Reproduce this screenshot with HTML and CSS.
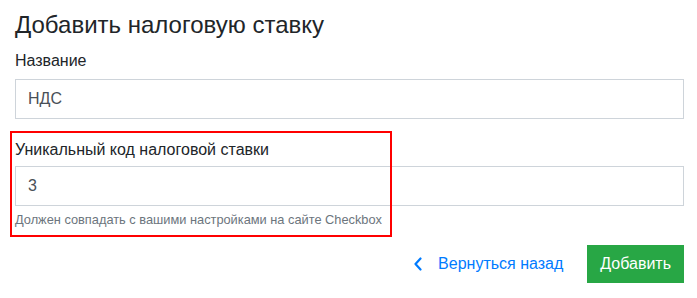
FILE: index.html
```html
<!DOCTYPE html>
<html lang="ru">
<head>
  <meta charset="UTF-8" />
  <title>Добавить налоговую ставку</title>
  <link rel="stylesheet" href="styles.css">
</head>
<body>
  <div class="page">
    <h3 class="title">Добавить налоговую ставку</h3>

    <div class="form-group">
      <label for="taxName">Название</label>
      <input type="text" id="taxName" class="form-control" value="НДС" />
    </div>

    <div class="form-group code-group">
      <label for="taxCode">Уникальный код налоговой ставки</label>
      <input type="text" id="taxCode" class="form-control" value="3" />
      <small class="form-hint">Должен совпадать с вашими настройками на сайте Checkbox</small>
      <div class="highlight"></div>
    </div>

    <div class="actions">
      <a href="#" class="back-link">
        <svg width="10" height="14" viewBox="0 0 10 14">
          <path d="M7.5 1.5 L2.5 7 L7.5 12.5" fill="none" stroke="#007bff" stroke-width="2.2" stroke-linecap="round" stroke-linejoin="round"/>
        </svg>
        <span>Вернуться назад</span>
      </a>
      <button class="btn-add">Добавить</button>
    </div>
  </div>
</body>
</html>
```

FILE: styles.css
```css
body {
  margin: 0;
  font-family: 'Liberation Sans', Arial, sans-serif;
  font-size: 16px;
  line-height: 1.5;
  color: #212529;
  background-color: #fff;
}

.page {
  padding: 11px 13px 0 15px;
}

.title {
  margin: 0 0 9px;
  font-size: 24px;
  font-weight: 400;
  line-height: 1.2;
}

.form-group {
  margin-bottom: 19px;
}

.form-group label {
  display: block;
  margin-bottom: 6px;
}

.form-control {
  display: block;
  width: 100%;
  height: 40px;
  padding: 6px 12px;
  box-sizing: border-box;
  border: 1px solid #ced4da;
  border-radius: 0;
  font-family: inherit;
  font-size: 16px;
  color: #495057;
  background-color: #fff;
}

.code-group {
  position: relative;
  margin-bottom: 16px;
}

.code-group label {
  margin-bottom: 4px;
}

.form-hint {
  display: block;
  margin-top: 4px;
  font-size: 12.8px;
  color: #6c757d;
}

/* red annotation frame */
.highlight {
  position: absolute;
  left: -5px;
  top: -7px;
  width: 382px;
  height: 106px;
  box-sizing: border-box;
  border: 2px solid #ff0000;
  pointer-events: none;
}

.actions {
  display: flex;
  justify-content: flex-end;
  align-items: center;
  gap: 24px;
}

.back-link {
  display: flex;
  align-items: center;
  gap: 15px;
  color: #007bff;
  text-decoration: none;
}

.btn-add {
  height: 38px;
  padding: 6px 12px;
  border: 1px solid #28a745;
  border-radius: 0;
  background-color: #28a745;
  color: #fff;
  font-family: inherit;
  font-size: 16px;
  line-height: 24px;
  cursor: pointer;
}
```
